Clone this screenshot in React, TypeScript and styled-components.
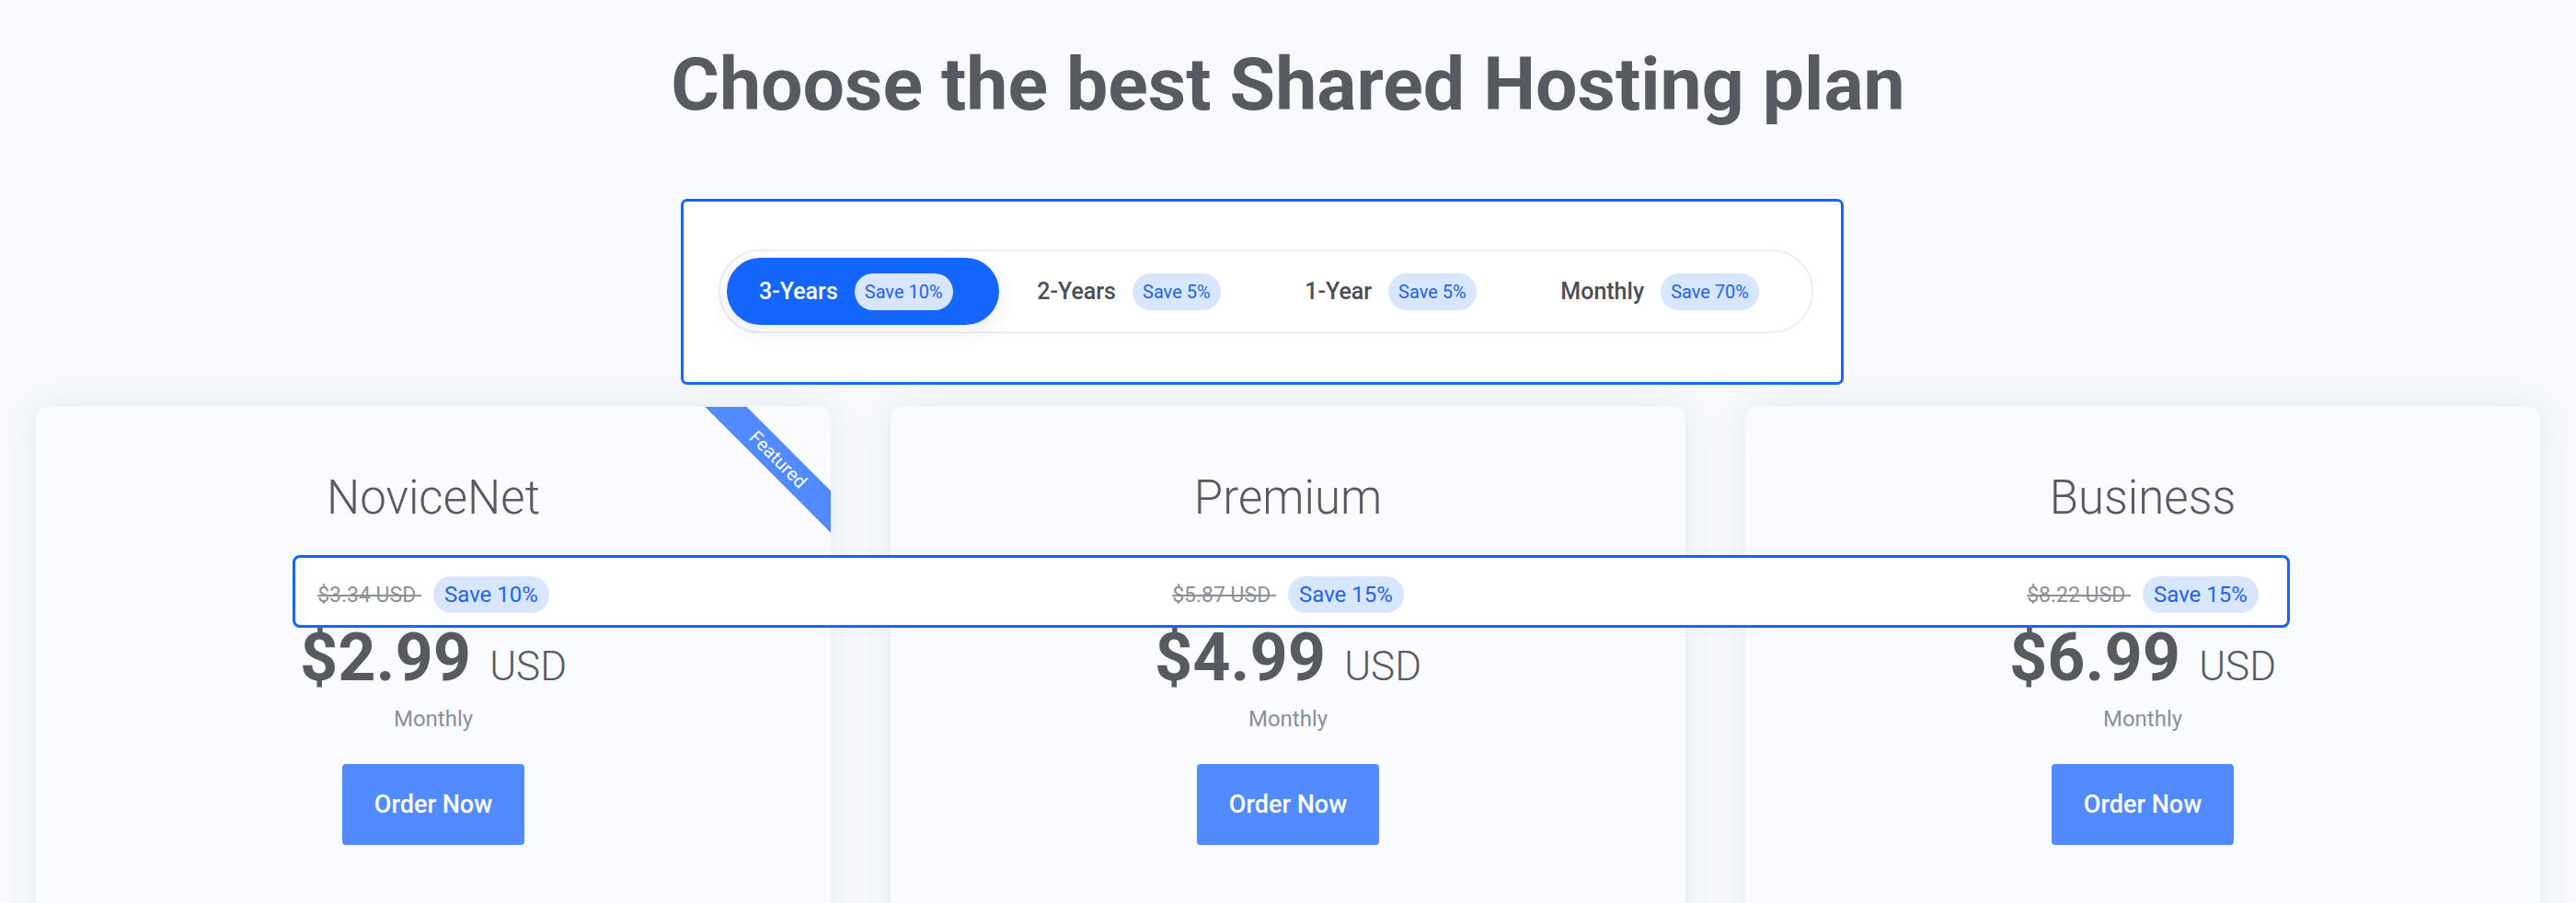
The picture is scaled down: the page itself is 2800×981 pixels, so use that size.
import React from "react";
import styled, { createGlobalStyle } from "styled-components";

const GlobalStyle = createGlobalStyle`
  html, body {
    margin: 0;
    padding: 0;
    height: 981px;
    overflow: hidden;
    background: #f7f9fd;
    font-family: Roboto, "Noto Sans", "Liberation Sans", sans-serif;
  }
  * { box-sizing: border-box; }
`;

const Page = styled.main`
  display: flex;
  flex-direction: column;
  padding-top: 52px;
`;

const Title = styled.h1`
  margin: 0;
  text-align: center;
  font-size: 80.6px;
  line-height: 80px;
  font-weight: 700;
  color: #575a61;
`;

const SwitchRow = styled.div`
  display: flex;
  justify-content: center;
  padding-right: 56px;
  margin-top: 84px;
`;

const SwitchPanel = styled.div`
  width: 1264px;
  height: 202px;
  background: #ffffff;
  border: 3px solid #1664ff;
  border-radius: 7px;
  padding: 52px 30px 0 38px;
`;

const TabList = styled.div`
  display: flex;
  justify-content: space-between;
  height: 91px;
  padding: 7px;
  border: 2px solid #eceef3;
  border-radius: 999px;
  background: #ffffff;
`;

const Tab = styled.button<{ $active?: boolean }>`
  display: flex;
  align-items: center;
  gap: 18px;
  height: 73px;
  padding: 0 50px 0 35px;
  border: none;
  border-radius: 999px;
  font-family: inherit;
  font-size: 25px;
  font-weight: 500;
  cursor: pointer;
  background: ${(p) => (p.$active ? "#1565ff" : "transparent")};
  color: ${(p) => (p.$active ? "#ffffff" : "#4b4e56")};
  box-shadow: ${(p) => (p.$active ? "0 6px 22px rgba(40, 60, 110, 0.10)" : "none")};
`;

const Badge = styled.span<{ $size?: "sm" | "md" }>`
  display: inline-flex;
  align-items: center;
  height: 40px;
  padding: 0 ${(p) => (p.$size === "md" ? "12px" : "11px")};
  border-radius: 20px;
  background: #d7e5fd;
  color: #1f63f0;
  font-size: ${(p) => (p.$size === "md" ? "24px" : "20px")};
  font-weight: 400;
  white-space: nowrap;
`;

const CardGrid = styled.section`
  position: relative;
  display: grid;
  grid-template-columns: repeat(3, 864px);
  gap: 65px;
  padding: 0 39px;
  margin-top: 24px;
`;

const Card = styled.article`
  position: relative;
  display: flex;
  flex-direction: column;
  align-items: center;
  height: 640px;
  padding-top: 74px;
  background: #f9fbff;
  border-radius: 14px;
  box-shadow: 0 0 34px rgba(205, 214, 232, 0.45);
`;

const PlanName = styled.h2`
  margin: 0;
  font-size: 51px;
  line-height: 50px;
  font-weight: 300;
  color: #575a61;
`;

const OldRow = styled.div`
  position: relative;
  z-index: 2;
  display: flex;
  align-items: center;
  gap: 13px;
  margin-top: 60px;
  height: 40px;
`;

const OldPrice = styled.s`
  font-size: 23px;
  color: #8d9097;
  text-decoration-thickness: 2px;
`;

const PriceRow = styled.div`
  display: flex;
  align-items: baseline;
  gap: 20px;
  margin-top: 13px;
  line-height: 72px;
  color: #575a61;
`;

const Amount = styled.span`
  font-size: 72px;
  font-weight: 700;
`;

const Currency = styled.span`
  font-size: 44px;
  font-weight: 300;
`;

const Period = styled.div`
  margin-top: 9px;
  font-size: 24px;
  line-height: 24px;
  color: #8c8f97;
`;

const OrderButton = styled.button`
  margin-top: 37px;
  width: 198px;
  height: 88px;
  border: none;
  border-radius: 4px;
  background: #528bff;
  color: #ffffff;
  font-family: inherit;
  font-size: 27px;
  font-weight: 500;
  cursor: pointer;
`;

const RibbonClip = styled.div`
  position: absolute;
  top: 0;
  right: 0;
  width: 140px;
  height: 140px;
  overflow: hidden;
  border-top-right-radius: 14px;
`;

const RibbonBand = styled.div`
  position: absolute;
  left: -27px;
  top: 41px;
  width: 220px;
  height: 32px;
  transform: rotate(45deg);
  background: #528bff;
  color: #ffffff;
  font-size: 20px;
  line-height: 32px;
  text-align: center;
`;

const Highlight = styled.div`
  position: absolute;
  z-index: 1;
  left: 318px;
  top: 161px;
  width: 2171px;
  height: 79px;
  border: 3px solid #1664ff;
  border-radius: 8px;
  background: #ffffff;
  pointer-events: none;
`;

const tabs = [
  { label: "3-Years", save: "Save 10%", active: true },
  { label: "2-Years", save: "Save 5%" },
  { label: "1-Year", save: "Save 5%" },
  { label: "Monthly", save: "Save 70%" },
];

const plans = [
  { name: "NoviceNet", old: "$3.34 USD", save: "Save 10%", price: "$2.99", featured: true },
  { name: "Premium", old: "$5.87 USD", save: "Save 15%", price: "$4.99" },
  { name: "Business", old: "$8.22 USD", save: "Save 15%", price: "$6.99" },
];

export default function App() {
  return (
    <>
      <GlobalStyle />
      <Page>
        <Title>Choose the best Shared Hosting plan</Title>
        <SwitchRow>
          <SwitchPanel>
            <TabList>
              {tabs.map((t) => (
                <Tab key={t.label} $active={t.active}>
                  {t.label}
                  <Badge $size="sm">{t.save}</Badge>
                </Tab>
              ))}
            </TabList>
          </SwitchPanel>
        </SwitchRow>
        <CardGrid>
          <Highlight />
          {plans.map((p) => (
            <Card key={p.name}>
              {p.featured && (
                <RibbonClip>
                  <RibbonBand>Featured</RibbonBand>
                </RibbonClip>
              )}
              <PlanName>{p.name}</PlanName>
              <OldRow>
                <OldPrice>{p.old}{"\u00a0"}</OldPrice>
                <Badge $size="md">{p.save}</Badge>
              </OldRow>
              <PriceRow>
                <Amount>{p.price}</Amount>
                <Currency>USD</Currency>
              </PriceRow>
              <Period>Monthly</Period>
              <OrderButton>Order Now</OrderButton>
            </Card>
          ))}
        </CardGrid>
      </Page>
    </>
  );
}
